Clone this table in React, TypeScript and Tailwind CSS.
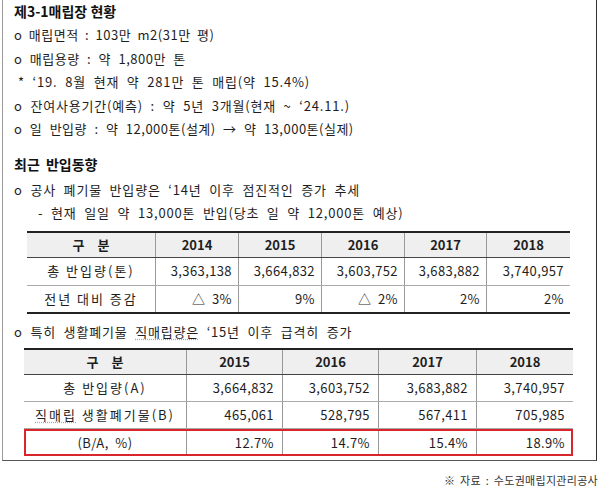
import React from 'react';

const font = { fontFamily: '"Noto Sans CJK KR", "Noto Sans", sans-serif' };

const t1Years = ['2014', '2015', '2016', '2017', '2018'];
const t1Rows = [
  { label: '총 반입량(톤)', values: ['3,363,138', '3,664,832', '3,603,752', '3,683,882', '3,740,957'] },
  { label: '전년 대비 증감', values: ['△  3%', '9%', '△  2%', '2%', '2%'] },
];

const t2Years = ['2015', '2016', '2017', '2018'];
const t2Rows = [
  { label: '총 반입량(A)', values: ['3,664,832', '3,603,752', '3,683,882', '3,740,957'] },
  { label: '직매립 생활폐기물(B)', values: ['465,061', '528,795', '567,411', '705,985'] },
];

const Line = ({ children, className = '' }: { children: React.ReactNode; className?: string }) => (
  <div className={`h-[23.4px] leading-[23.4px] whitespace-pre ${className}`}>{children}</div>
);

const body = 'tracking-[0.8px] [word-spacing:4px]';

export default function App() {
  return (
    <div className="w-[600px] h-[498px] bg-white text-[#1e1e1e] text-[13px]" style={font}>
      <div className="ml-[2px] w-[595px] h-[461px] border-l border-r border-b border-l-[#9a9a9a] border-r-[#333] border-b-[#555] pl-[11px]">
        <Line className="font-bold text-[14px] text-[#111]">제3-1매립장 현황</Line>
        <Line className="tracking-[0.5px] [word-spacing:3px]">o 매립면적 : 103만 m2(31만 평)</Line>
        <Line className="tracking-[0.5px] [word-spacing:4px]">o 매립용량 : 약 1,800만 톤</Line>
        <Line className={`pl-[4px] ${body}`}>* ‘19. 8월 현재 약 281만 톤 매립(약 15.4%)</Line>
        <Line className={body}>o 잔여사용기간(예측) : 약 5년 3개월(현재 ~ ‘24.11.)</Line>
        <Line className="tracking-[0.5px] [word-spacing:4px]">o 일 반입량 : 약 12,000톤(설계) → 약 13,000톤(실제)</Line>

        <Line className="mt-[13px] font-bold text-[14px] text-[#111] [word-spacing:3px]">최근 반입동향</Line>
        <Line className={`mt-[1px] ${body}`}>o 공사 폐기물 반입량은 ‘14년 이후 점진적인 증가 추세</Line>
        <Line className={`pl-[24px] ${body}`}>- 현재 일일 약 13,000톤 반입(당초 일 약 12,000톤 예상)</Line>

        {/* 표 1 */}
        <div className="mt-[6px] ml-[13px] w-[543px] border-t-2 border-b-2 border-[#222]">
          <div className="grid grid-cols-[129px_83px_83px_83px_82px_83px] h-[25px] bg-[#efefef] border-b border-[#444] font-bold">
            <div className="flex items-center justify-center border-r border-[#999] tracking-[5px] pl-[5px]">구 분</div>
            {t1Years.map((y, i) => (
              <div key={y} className={`flex items-center justify-center ${i < 4 ? 'border-r border-[#999]' : ''}`}>{y}</div>
            ))}
          </div>
          {t1Rows.map((r, ri) => (
            <div key={r.label} className={`grid grid-cols-[129px_83px_83px_83px_82px_83px] ${ri === 0 ? 'h-[28px] border-b border-[#aaa]' : 'h-[26px]'}`}>
              <div className="flex items-center justify-center border-r border-[#999] tracking-[2px] whitespace-pre">{r.label}</div>
              {r.values.map((v, i) => (
                <div key={i} className={`flex items-center justify-end pr-[6px] tracking-[0.4px] whitespace-pre ${i < 4 ? 'border-r border-[#999]' : ''}`}>{v}</div>
              ))}
            </div>
          ))}
        </div>

        <Line className={`mt-[6px] ${body}`}>
          o 특히 생활폐기물 <span className="underline decoration-dotted decoration-[#e0a040] underline-offset-2">직매립량은</span> ‘15년 이후 급격히 증가
        </Line>

        {/* 표 2 */}
        <div className="mt-[5px] ml-[10px] w-[549px] border-t-2 border-[#222]">
          <div className="grid grid-cols-[163px_96px_96px_98px_96px] h-[25px] bg-[#efefef] border-b border-[#444] font-bold">
            <div className="flex items-center justify-center border-r border-[#999] tracking-[5px] pl-[5px]">구 분</div>
            {t2Years.map((y, i) => (
              <div key={y} className={`flex items-center justify-center ${i < 3 ? 'border-r border-[#999]' : ''}`}>{y}</div>
            ))}
          </div>
          {t2Rows.map((r, ri) => (
            <div key={r.label} className="grid grid-cols-[163px_96px_96px_98px_96px] h-[27px] border-b border-[#aaa]">
              <div className="flex items-center justify-center border-r border-[#999] tracking-[2px] whitespace-pre">
                {ri === 1 ? (
                  <span>
                    <span className="underline decoration-dotted decoration-[#e0a040] underline-offset-2">직매립</span> 생활폐기물(B)
                  </span>
                ) : (
                  r.label
                )}
              </div>
              {r.values.map((v, i) => (
                <div key={i} className={`flex items-center justify-end pr-[8px] tracking-[0.4px] ${i < 3 ? 'border-r border-[#999]' : ''}`}>{v}</div>
              ))}
            </div>
          ))}
          <div className="relative grid grid-cols-[163px_96px_96px_98px_96px] h-[27px]">
            <div className="flex items-center justify-center border-r border-[#999] tracking-[0.5px] [word-spacing:3px]">(B/A, %)</div>
            {['12.7%', '14.7%', '15.4%', '18.9%'].map((v, i) => (
              <div key={i} className={`flex items-center justify-end pr-[8px] tracking-[0.4px] ${i < 3 ? 'border-r border-[#999]' : ''}`}>{v}</div>
            ))}
            <div className="absolute inset-0 border-2 border-[#d8262c] pointer-events-none" />
          </div>
        </div>
      </div>

      <div className="mt-[11px] pr-[2px] text-right text-[11px] text-[#333] tracking-[0.3px] [word-spacing:2px]">※ 자료 : 수도권매립지관리공사</div>
    </div>
  );
}
